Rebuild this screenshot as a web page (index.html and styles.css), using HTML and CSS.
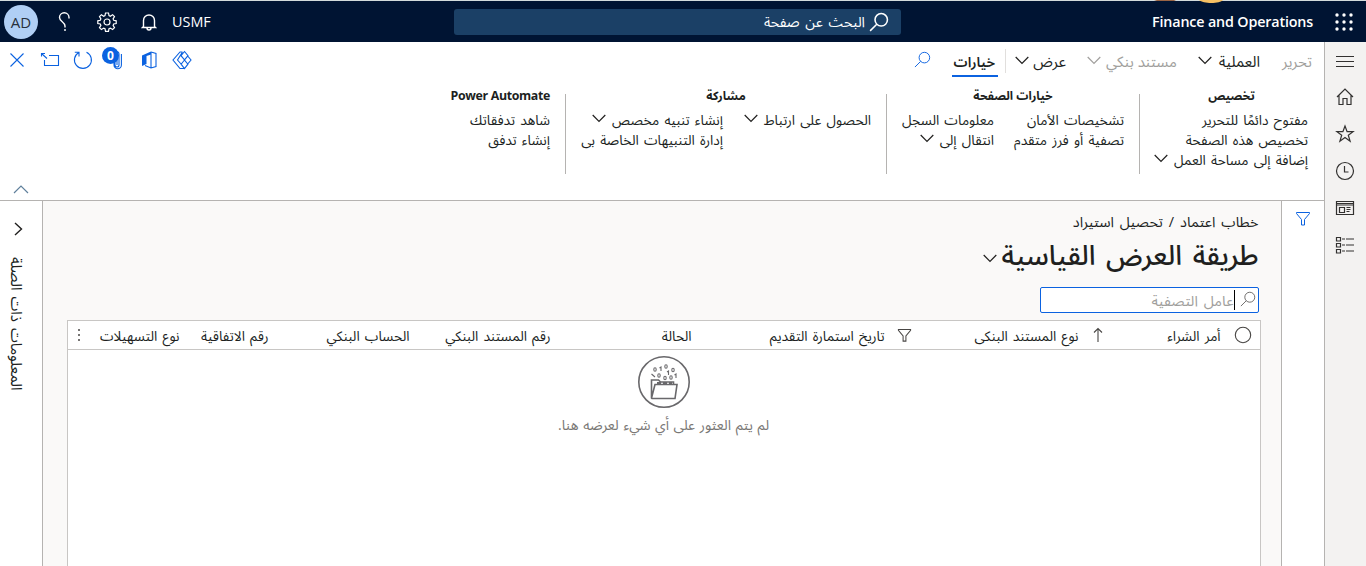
FILE: index.html
```html
<!DOCTYPE html>
<html lang="ar" dir="rtl">
<head>
<meta charset="utf-8">
<title>Finance and Operations</title>
<link rel="stylesheet" href="styles.css">
</head>
<body>
<svg width="0" height="0" class="defs" aria-hidden="true">
  <symbol id="chev" viewBox="0 0 14 9"><path d="M.7 1 7 7.500 13.300 1"/></symbol>
  <symbol id="lens" viewBox="0 0 18 18"><circle cx="11" cy="7" r="5.600"/><path d="M7 11 1 17"/></symbol>
  <symbol id="funnel" viewBox="0 0 16 16"><path d="M1.500 1.500h13v1L9.500 8.500v5.500h-3V8.500L1.500 2.500z"/></symbol>
</svg>
<header class="topbar">
  <svg class="waffle" viewBox="0 0 18 18"><g><circle cx="2" cy="2" r="1.700"/><circle cx="9" cy="2" r="1.700"/><circle cx="16" cy="2" r="1.700"/><circle cx="2" cy="9" r="1.700"/><circle cx="9" cy="9" r="1.700"/><circle cx="16" cy="9" r="1.700"/><circle cx="2" cy="16" r="1.700"/><circle cx="9" cy="16" r="1.700"/><circle cx="16" cy="16" r="1.700"/></g></svg>
  <div class="brand" dir="ltr">Finance and Operations</div>
  <div class="search"><svg class="i20"><use href="#lens"/></svg><span>البحث عن صفحة</span></div>
  <div class="tools" dir="ltr">
    <div class="avatar">AD</div>
    <svg class="help" viewBox="0 0 14 20"><path d="M12 6.500V5.500a4.700 4.700 0 0 0-9.500 0c0 4 5.500 4.500 5.500 8.500v1.500M8 17v2"/></svg>
    <svg class="gear" viewBox="0 0 20 20"><path d="M8.500 1h3l.5 2.600 1.300.6 2.300-1.500 1.900 1.900-1.400 2.300.6 1.400 2.500.5v2.700l-2.500.5-.6 1.400 1.400 2.300-1.900 1.900-2.300-1.500-1.300.6-.5 2.600h-3l-.5-2.600-1.300-.6-2.300 1.500-1.900-1.900 1.400-2.300-.6-1.400L.8 11.500V8.800l2.500-.5.6-1.400-1.400-2.300 1.900-1.900 2.300 1.500 1.300-.6z"/><circle cx="10" cy="10" r="3"/></svg>
    <svg class="bell" viewBox="0 0 16 18"><path d="M2.500 13.500V7.500a5.500 5.500 0 0 1 11 0v6l1 1h-13zM6 15a2 2 0 0 0 4 0"/></svg>
    <span class="company">USMF</span>
  </div>
  <svg class="peek" viewBox="0 0 70 4"><path fill="#9a6444" d="M0 0h22l-2 1H3z"/><path fill="#f6c063" d="M45 0h24c-3 4-20 4-24 0z"/></svg>
</header>
<div class="shell">
  <nav class="rail">
    <svg viewBox="0 0 20 20"><path d="M1 5.500h18M1 10.500h18M1 15.500h18"/></svg>
    <svg viewBox="0 0 20 20"><path d="M2 10 10 2l8 8M4 8.500V17.500h4V11.500h4v6h4v-9"/></svg>
    <svg viewBox="0 0 20 20"><path d="m10 2 2.100 5.700h6l-4.800 3.600 1.800 5.900-5.100-3.600-5.100 3.600 1.800-5.900L1.900 7.700h6z"/></svg>
    <svg viewBox="0 0 20 20"><circle cx="10" cy="10" r="8.500"/><path d="M9.500 5v6h4"/></svg>
    <svg viewBox="0 0 20 20"><path d="M1.500 3.500h17v13h-17zM1.500 5.500h17M1.500 7h17M4.500 9.500h5v5h-5zM11.500 9.500h4M11.500 11.500h4M11.500 13.500h3"/></svg>
    <svg viewBox="0 0 20 20"><path d="M1.500 2.500h4v3.500h-4zM1.500 8.500h4V12h-4zM1.500 14.500h4V18h-4zM7 4h3M11 4h8M7 10h3M11 10h8M7 16h3M11 16h8"/></svg>
  </nav>
  <main>
    <section class="pane">
      <div class="tabs">
        <span class="t dim edit">تحرير</span>
        <span class="t process">العملية</span><svg class="chev"><use href="#chev"/></svg>
        <span class="t dim doc">مستند بنكي</span><svg class="chev dim"><use href="#chev"/></svg>
        <span class="t show">عرض</span><svg class="chev"><use href="#chev"/></svg>
        <i class="vline"></i>
        <span class="t active"><b>خيارات</b></span>
        <svg class="find"><use href="#lens"/></svg>
        <div class="actions" dir="ltr">
          <svg viewBox="0 0 20 20"><path d="m3.500 3.500 13 13M16.500 3.500l-13 13"/></svg>
          <svg viewBox="0 0 20 20"><path d="M9 5.500h9.500v10h-14V10M1.500 3.500l5.500 5M1.500 6.500V3.500H5"/></svg>
          <svg viewBox="0 0 20 20"><path d="M13.500 2.200a8.500 8.500 0 1 1-7.600.2M6 6.500V2.300H1.800"/></svg>
          <span class="clip"><svg viewBox="0 0 20 20"><path d="M9 5v10a2 2 0 0 0 4 0V4a2.500 2.500 0 0 0-5 0v11a3.700 3.700 0 0 0 7.400 0V4M11 5v10"/></svg><b>0</b></span>
          <svg viewBox="0 0 20 20"><path d="m12 2 5 1.500v13l-5 1.500-6-2.500M12 2v16"/><path class="solid" d="M3 5.500 12 1.500v3L7.500 6v8L3 16z"/></svg>
          <svg viewBox="0 0 20 20"><path d="M10.500 2H8L1 10l7 8.500h4.500M10.500 2 5.500 10l4 4.500M12.500 1.500 16 5.700l-3.500 4.200L9 5.700zM15.700 6 19 10l-3.300 4-3.300-4zM12.500 10l3.400 4.200-3.400 4.300-3.400-4.300z"/></svg>
        </div>
      </div>
      <div class="groups">
        <div class="group g1"><h4>تخصيص</h4><div class="cols"><div><p>مفتوح دائمًا للتحرير</p><p>تخصيص هذه الصفحة</p><p>إضافة إلى مساحة العمل<svg class="chev"><use href="#chev"/></svg></p></div></div></div>
        <div class="group g2"><h4>خيارات الصفحة</h4><div class="cols"><div><p>تشخيصات الأمان</p><p>تصفية أو فرز متقدم</p></div><div><p>معلومات السجل</p><p>انتقال إلى<svg class="chev"><use href="#chev"/></svg></p></div></div></div>
        <div class="group g3"><h4>مشاركة</h4><div class="cols"><div><p>الحصول على ارتباط<svg class="chev"><use href="#chev"/></svg></p></div><div><p>إنشاء تنبيه مخصص<svg class="chev"><use href="#chev"/></svg></p><p>إدارة التنبيهات الخاصة بى</p></div></div></div>
        <div class="group g4"><h4>Power Automate</h4><div class="cols"><div><p>شاهد تدفقاتك</p><p>إنشاء تدفق</p></div></div></div>
      </div>
      <svg class="collapse" viewBox="0 0 16 9"><path d="M1 8 8 1l7 7"/></svg>
    </section>
    <section class="work">
      <aside class="filters"><svg><use href="#funnel"/></svg></aside>
      <div class="content">
        <div class="crumb">خطاب اعتماد / تحصيل استيراد</div>
        <h1><span>طريقة العرض القياسية</span><svg class="chev"><use href="#chev"/></svg></h1>
        <div class="filterbox"><svg><use href="#lens"/></svg><i></i><span>عامل التصفية</span></div>
        <div class="grid">
          <div class="head">
            <svg class="radio" viewBox="0 0 18 18"><circle cx="9" cy="9" r="7.700"/></svg>
            <span class="c1">أمر الشراء</span>
            <svg class="sort" viewBox="0 0 10 16"><path d="M5 15V1.500M1 5.500l4-4 4 4"/></svg>
            <span class="c2">نوع المستند البنكى</span>
            <svg class="fun"><use href="#funnel"/></svg>
            <span class="c3">تاريخ استمارة التقديم</span>
            <span class="c4">الحالة</span>
            <span class="c5">رقم المستند البنكي</span>
            <span class="c6">الحساب البنكي</span>
            <span class="c7">رقم الاتفاقية</span>
            <span class="c8">نوع التسهيلات</span>
            <svg class="dots" viewBox="0 0 4 16"><circle cx="2" cy="3" r="1"/><circle cx="2" cy="8" r="1"/><circle cx="2" cy="13" r="1"/></svg>
          </div>
          <div class="empty">
            <svg viewBox="0 0 54 54"><circle cx="27" cy="27" r="25.200"/><path d="M14.500 43V25h7l2 2h13v3M14.500 43l3.500-13.500h22L38 43.500H15z"/><path d="M20 28h15" stroke-width="2" stroke-dasharray="4 2"/><g class="bits"><ellipse cx="18" cy="14.500" rx="1.200" ry="1.800"/><path d="m22.500 13 1.500-1v4"/><ellipse cx="29" cy="11.500" rx="1.200" ry="1.800"/><ellipse cx="36" cy="15" rx="1.200" ry="1.800"/><path d="m14.500 19 3.500 3M30 17l1.500-1v4"/><ellipse cx="22" cy="20.500" rx="1.200" ry="1.800"/><ellipse cx="28" cy="23" rx="1.200" ry="1.800"/><ellipse cx="34" cy="22.500" rx="1.200" ry="1.800"/><path d="m37.500 20 1.500-1v4"/></g></svg>
            <p>لم يتم العثور على أي شيء لعرضه هنا.</p>
          </div>
        </div>
      </div>
      <aside class="related"><svg viewBox="0 0 9 14"><path d="m1 1 6.500 6L1 13"/></svg><span>المعلومات ذات الصلة</span></aside>
    </section>
  </main>
</div>
</body>
</html>
```
FILE: styles.css
```css
* { box-sizing: border-box; }
body { margin: 0; height: 566px; overflow: hidden; background: #fff; color: #201f1e; font: 14px/20px "Open Sans", "Noto Sans", "Noto Sans Arabic", "DejaVu Sans", sans-serif; white-space: nowrap; }
p, h1, h4 { margin: 0; }
svg { fill: none; stroke: currentColor; stroke-width: 1.200; flex: none; }
.defs { position: absolute; }
.topbar { position: relative; height: 42px; border-top: 1px solid #d3dbdc; background: #001433; color: #fff; display: flex; align-items: center; padding-right: 13px; }
.peek { position: absolute; top: -1px; right: 142px; width: 70px; height: 4px; stroke: none; }
.waffle { width: 18px; height: 18px; fill: #fff; stroke: none; }
.brand { width: 184px; font-size: 14.300px; font-weight: 600; padding-left: 1px; letter-spacing: -.15px; }
.search { width: 447px; height: 26px; margin-right: 250px; background: #1b4066; border-radius: 3px; display: flex; align-items: center; padding-right: 12px; gap: 4px; word-spacing: 2px; font-size: 14.200px; }
.i20 { width: 20px; height: 20px; stroke-width: 1.400; }
.tools { margin-right: auto; display: flex; align-items: center; padding-left: 4px; }
.avatar { width: 34px; height: 34px; border-radius: 50%; background: #b0cff5; color: #27303c; text-align: center; line-height: 34px; font-size: 15px; }
.help { width: 14px; height: 20px; margin-left: 19px; stroke-width: 1.400; }
.gear { width: 20px; height: 20px; margin-left: 26px; }
.bell { width: 16px; height: 18px; margin-left: 24px; stroke-width: 1.400; }
.company { margin-left: 15px; font-size: 14.400px; }
.shell { display: flex; height: 524px; }
.rail { width: 42px; background: #f3f2f1; border-left: 1px solid #b5b3b1; display: flex; flex-direction: column; align-items: center; padding: 9px 1px 0 0; gap: 17px; color: #323130; }
.rail svg { width: 20px; height: 20px; }
.rail svg:nth-child(n+2) { position: relative; top: -1px; }
main { flex: 1; display: flex; flex-direction: column; min-width: 0; }
.pane { height: 159px; border-bottom: 1px solid #b5b3b1; position: relative; }
.tabs { height: 37px; display: flex; align-items: center; padding-right: 12px; font-size: 15px; }
.t { height: 24px; line-height: 25px; }
.dim { color: #a19f9d; }
.edit { width: 31px; margin-left: 21px; }
.process { width: 43px; }
.doc { width: 71px; margin-right: 21px; }
.show { width: 32px; margin-right: 21px; }
.chev { width: 14px; height: 9px; stroke-width: 1.200; }
.tabs .chev { margin-right: 5px; }
.vline { width: 1px; height: 24px; background: #e1dfdd; margin-right: 9px; }
.active { width: 46px; margin: 2px 7px 0 0; padding-right: 3px; border-bottom: 2px solid #0b62e0; height: 31px; line-height: 30px; }
.active b { font-size: 14px; font-weight: 600; }
.find { width: 17px; height: 17px; margin: 0 21px 3px 0; color: #0b62e0; stroke-width: 1; }
.actions { margin: 0 auto 2px 0; display: flex; padding-left: 7px; color: #0b62e0; }
.actions svg { width: 20px; height: 20px; margin-right: 13px; stroke-width: 1.100; }
.clip { position: relative; width: 20px; height: 20px; margin-right: 13px; }
.actions .clip svg { margin: 0; }
.clip b { position: absolute; left: -4px; top: -3px; width: 17px; height: 17px; border-radius: 50%; background: #0b62e0; color: #fff; font-size: 12px; line-height: 17px; text-align: center; }
.actions .solid { fill: currentColor; stroke: none; }
.groups { display: flex; padding: 15px 16px 0 0; height: 96px; }
.group { height: 80px; margin-left: 15px; border-left: 1px solid #b5b3b1; font-size: 13.700px; word-spacing: 1.600px; }
.group h4 { font-size: 12px; line-height: 20px; margin-top: -8px; padding-left: 15px; text-align: center; height: 24px; word-spacing: 0; }
.group p { height: 20px; display: flex; align-items: center; gap: 6px; }
.group .chev { margin-bottom: 3px; }
.cols { display: flex; }
.g1 { width: 169px; }
.g2 { width: 238px; }
.g2 .cols > :first-child { width: 130px; }
.g3 { width: 306px; }
.g3 .cols > :first-child { width: 148px; }
.g4 { width: 99px; border: 0; }
.g4 h4 { padding: 0; font-size: 12.400px; letter-spacing: -.35px; }
.collapse { position: absolute; left: 13px; bottom: 6px; width: 16px; height: 9px; color: #60809c; }
.work { flex: 1; display: flex; min-height: 0; }
.filters { width: 44px; border-left: 1px solid #b5b3b1; display: flex; justify-content: center; padding: 10px 0 0 1px; color: #0b62e0; }
.filters svg { width: 16px; height: 16px; stroke-width: 1; }
.content { flex: 1; background: #faf9f8; padding: 11px 22px 0 24px; display: flex; flex-direction: column; align-items: flex-start; }
.crumb { font-size: 14.400px; word-spacing: 2.200px; }
.related { width: 43px; border-right: 1px solid #b5b3b1; display: flex; flex-direction: column; align-items: center; padding: 21px 8px 0 0; }
.related svg { width: 9px; height: 14px; margin-right: -3px; stroke-width: 1.400; }
.related span { writing-mode: vertical-rl; direction: ltr; margin-top: 21px; height: 136px; font-size: 15px; word-spacing: 2px; }
h1 { font-size: 27.400px; line-height: 40px; font-weight: 500; height: 46px; display: flex; align-items: center; gap: 5px; word-spacing: 3.500px; }
h1 .chev { margin-top: 7px; }
.filterbox { margin: 9px 0 0 0; width: 219px; height: 26px; border: 1px solid #0b62e0; border-radius: 2px; background: #fff; display: flex; align-items: center; padding-right: 2px; color: #a19f9d; font-size: 14.600px; word-spacing: 2px; }
.filterbox svg { width: 16px; height: 16px; color: #605e5c; stroke-width: 1; margin-bottom: 2px; }
.filterbox i { width: 1px; height: 20px; background: #000; margin-right: 5px; }
.grid { width: 1194px; flex: 1; margin: 7px -2px 0 0; background: #fff; border: 1px solid #c8c6c4; border-bottom: 0; }
.head { height: 29px; border-bottom: 1px solid #c8c6c4; display: flex; align-items: center; font-size: 13.700px; word-spacing: 1.600px; padding-right: 8px; }
.head span { padding-top: 1px; }
.head svg { color: #484644; stroke-width: 1.100; }
.radio { width: 18px; height: 18px; }
.c1 { width: 52px; margin-right: 13px; }
.sort { width: 10px; height: 16px; margin-right: 66px; }
.c2 { width: 106px; margin-right: 14px; }
.fun { width: 15px; height: 15px; margin-right: 61px; }
.c3 { width: 117px; margin-right: 12px; }
.c4 { width: 30px; margin-right: 76px; }
.c5 { width: 106px; margin-right: 111px; }
.c6 { width: 82px; margin-right: 35px; }
.c7 { width: 68px; margin-right: 59px; }
.c8 { width: 79px; margin-right: 21px; }
.head .dots { width: 4px; height: 16px; margin-right: 20px; fill: currentColor; stroke: none; }
.empty { display: flex; flex-direction: column; align-items: center; padding-top: 5px; color: #797775; }
.empty svg { width: 54px; height: 54px; stroke-width: 1.600; color: #69686b; }
.empty .bits { stroke-width: 1.100; }
.empty p { margin-top: 6px; word-spacing: 1px; }
```
